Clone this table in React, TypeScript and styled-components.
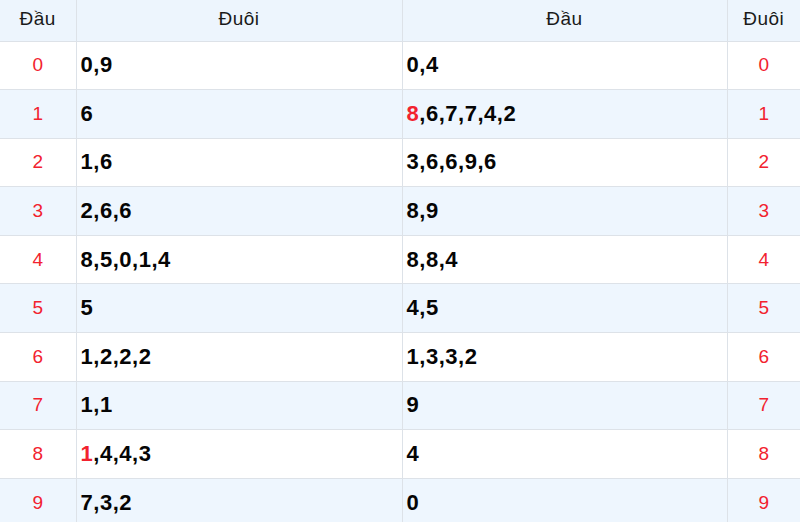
import React from "react";
import styled, { createGlobalStyle } from "styled-components";

const GlobalStyle = createGlobalStyle`
  html, body {
    margin: 0;
    padding: 0;
    background: #fff;
    overflow: hidden;
  }
  body {
    font-family: "Liberation Sans", Arial, sans-serif;
  }
`;

const Table = styled.table`
  width: 800px;
  border-collapse: collapse;
  table-layout: fixed;
  color: #111;
`;

const HeadCell = styled.th`
  height: 41px;
  padding: 0;
  background: #edf5fd;
  border: 1px solid #dde2e8;
  border-top: none;
  font-size: 19px;
  letter-spacing: 0.5px;
  font-weight: 400;
  color: #1a1a1a;
  text-align: center;
  vertical-align: top;
  padding-top: 8px;
  box-sizing: border-box;

  &:first-child {
    border-left: none;
  }
  &:last-child {
    border-right: none;
  }
`;

const Row = styled.tr<{ $alt: boolean }>`
  height: 48.6px;
  background: ${({ $alt }) => ($alt ? "#eef6fe" : "#fff")};
`;

const KeyCell = styled.td`
  padding: 0;
  border: 1px solid #dde2e8;
  text-align: center;
  color: #f2222f;
  font-size: 19px;

  &:first-child {
    border-left: none;
  }
  &:last-child {
    border-right: none;
  }
`;

const ValueCell = styled.td`
  padding: 0 0 0 4px;
  border: 1px solid #dde2e8;
  font-size: 22px;
  letter-spacing: 0.5px;
  font-weight: 700;
  color: #050505;
`;

const Hot = styled.span`
  color: #f2222f;
`;

type Digit = { d: string; hot?: boolean };

const rows: { dau: Digit[]; duoi: Digit[] }[] = [
  { dau: [{ d: "0" }, { d: "9" }], duoi: [{ d: "0" }, { d: "4" }] },
  {
    dau: [{ d: "6" }],
    duoi: [{ d: "8", hot: true }, { d: "6" }, { d: "7" }, { d: "7" }, { d: "4" }, { d: "2" }]
  },
  { dau: [{ d: "1" }, { d: "6" }], duoi: [{ d: "3" }, { d: "6" }, { d: "6" }, { d: "9" }, { d: "6" }] },
  { dau: [{ d: "2" }, { d: "6" }, { d: "6" }], duoi: [{ d: "8" }, { d: "9" }] },
  {
    dau: [{ d: "8" }, { d: "5" }, { d: "0" }, { d: "1" }, { d: "4" }],
    duoi: [{ d: "8" }, { d: "8" }, { d: "4" }]
  },
  { dau: [{ d: "5" }], duoi: [{ d: "4" }, { d: "5" }] },
  { dau: [{ d: "1" }, { d: "2" }, { d: "2" }, { d: "2" }], duoi: [{ d: "1" }, { d: "3" }, { d: "3" }, { d: "2" }] },
  { dau: [{ d: "1" }, { d: "1" }], duoi: [{ d: "9" }] },
  { dau: [{ d: "1", hot: true }, { d: "4" }, { d: "4" }, { d: "3" }], duoi: [{ d: "4" }] },
  { dau: [{ d: "7" }, { d: "3" }, { d: "2" }], duoi: [{ d: "0" }] }
];

const Digits = ({ list }: { list: Digit[] }) => (
  <>
    {list.map((x, i) => (
      <React.Fragment key={i}>
        {i > 0 && ","}
        {x.hot ? <Hot>{x.d}</Hot> : x.d}
      </React.Fragment>
    ))}
  </>
);

export default function App() {
  return (
    <>
      <GlobalStyle />
      <Table>
        <colgroup>
          <col style={{ width: 76 }} />
          <col style={{ width: 326 }} />
          <col style={{ width: 325 }} />
          <col style={{ width: 73 }} />
        </colgroup>
        <thead>
          <tr>
            <HeadCell>Đầu</HeadCell>
            <HeadCell>Đuôi</HeadCell>
            <HeadCell>Đầu</HeadCell>
            <HeadCell>Đuôi</HeadCell>
          </tr>
        </thead>
        <tbody>
          {rows.map((r, i) => (
            <Row key={i} $alt={i % 2 === 1}>
              <KeyCell>{i}</KeyCell>
              <ValueCell>
                <Digits list={r.dau} />
              </ValueCell>
              <ValueCell>
                <Digits list={r.duoi} />
              </ValueCell>
              <KeyCell>{i}</KeyCell>
            </Row>
          ))}
        </tbody>
      </Table>
    </>
  );
}
